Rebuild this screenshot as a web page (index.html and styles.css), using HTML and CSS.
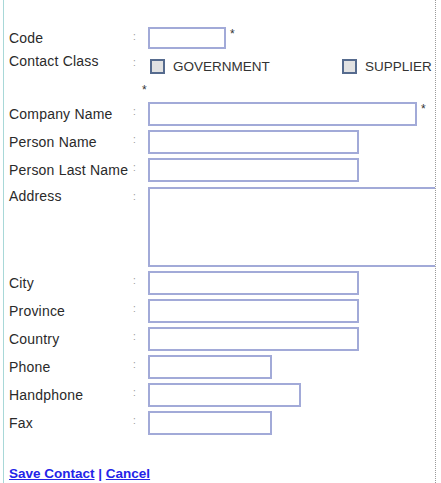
FILE: index.html
```html
<!DOCTYPE html>
<html lang="en">
<head>
    <meta charset="UTF-8">
    <title>Contact</title>
    <link rel="stylesheet" href="styles.css">
</head>
<body>
    <div class="form">
        <div class="row">
            <span class="label">Code</span>
            <span class="colon">:</span>
            <span class="value"><span class="field code"></span><span class="req">*</span></span>
        </div>

        <div class="row contact-class">
            <span class="label">Contact Class</span>
            <span class="colon">:</span>
            <span class="value options">
                <span class="option"><span class="check"></span>GOVERNMENT</span>
                <span class="option"><span class="check"></span>SUPPLIER</span>
            </span>
            <span class="req class-req">*</span>
        </div>

        <div class="row">
            <span class="label">Company Name</span>
            <span class="colon">:</span>
            <span class="value"><span class="field wide"></span><span class="req">*</span></span>
        </div>
        <div class="row">
            <span class="label">Person Name</span>
            <span class="colon">:</span>
            <span class="value"><span class="field medium"></span></span>
        </div>
        <div class="row">
            <span class="label">Person Last Name</span>
            <span class="colon">:</span>
            <span class="value"><span class="field medium"></span></span>
        </div>
        <div class="row address">
            <span class="label">Address</span>
            <span class="colon">:</span>
            <span class="value"><span class="field area"></span></span>
        </div>
        <div class="row">
            <span class="label">City</span>
            <span class="colon">:</span>
            <span class="value"><span class="field medium"></span></span>
        </div>
        <div class="row">
            <span class="label">Province</span>
            <span class="colon">:</span>
            <span class="value"><span class="field medium"></span></span>
        </div>
        <div class="row">
            <span class="label">Country</span>
            <span class="colon">:</span>
            <span class="value"><span class="field medium"></span></span>
        </div>
        <div class="row">
            <span class="label">Phone</span>
            <span class="colon">:</span>
            <span class="value"><span class="field short"></span></span>
        </div>
        <div class="row">
            <span class="label">Handphone</span>
            <span class="colon">:</span>
            <span class="value"><span class="field mid-short"></span></span>
        </div>
        <div class="row">
            <span class="label">Fax</span>
            <span class="colon">:</span>
            <span class="value"><span class="field short"></span></span>
        </div>

        <div class="actions">
            <a href="#">Save Contact</a> | <a href="#">Cancel</a>
        </div>
    </div>
</body>
</html>
```

FILE: styles.css
```css
body {
    margin: 0;
    padding: 0;
    background-color: #fff;
    font-family: "Liberation Sans", Arial, sans-serif;
    color: #2a2a2a;
}

.form {
    margin-left: 3px;
    width: 433px;
    height: 483px;
    box-sizing: border-box;
    padding: 27px 0 0 5px;
    border-left: 1px solid #a8d8d8;
    border-right: 1px dotted #9a9a9a;
    overflow: hidden;
}

.row {
    display: grid;
    grid-template-columns: 124px 15px 1fr;
    align-items: start;
    margin-bottom: 4px;
    font-size: 14px;
    line-height: 24px;
}

.label {
    white-space: nowrap;
    letter-spacing: 0.2px;
}

.colon {
    color: #999;
    font-size: 10px;
    line-height: 20px;
}

.value {
    display: flex;
    align-items: flex-start;
    white-space: nowrap;
}

.field {
    display: block;
    box-sizing: border-box;
    height: 24px;
    border: 2px solid #a2aad8;
    background-color: #fff;
    flex: none;
}

.field.code {
    width: 78px;
    height: 22px;
}

.row:first-child {
    line-height: 22px;
}

.field.wide {
    width: 269px;
}

.field.medium {
    width: 211px;
}

.field.short {
    width: 124px;
}

.field.mid-short {
    width: 153px;
}

.field.area {
    width: 300px;
    height: 80px;
    margin-top: 1px;
}

.req {
    font-size: 12px;
    line-height: 14px;
    padding-left: 4px;
    color: #333;
}

.contact-class {
    line-height: 16px;
    height: 45px;
}

.options {
    padding-top: 6px;
}

.option {
    display: flex;
    align-items: center;
    font-size: 13.5px;
    line-height: 15px;
    color: #333;
}

.option:first-child {
    width: 192px;
}

.check {
    display: inline-block;
    width: 15px;
    height: 15px;
    box-sizing: border-box;
    margin: 0 8px 0 2px;
    border: 2px solid #566b8e;
    background-color: #e2e2e2;
}

.class-req {
    grid-column: 2;
    padding: 8px 0 0 9px;
}

.address {
    line-height: 18px;
}

.address .label,
.address .colon {
    padding-top: 1px;
}

.address + .row {
    margin-top: 1px;
}

.actions {
    margin-top: 31px;
    font-size: 13.5px;
    font-weight: bold;
    line-height: 16px;
    color: #2424e8;
}

.actions a {
    color: #2424e8;
    text-decoration: underline;
}
```
